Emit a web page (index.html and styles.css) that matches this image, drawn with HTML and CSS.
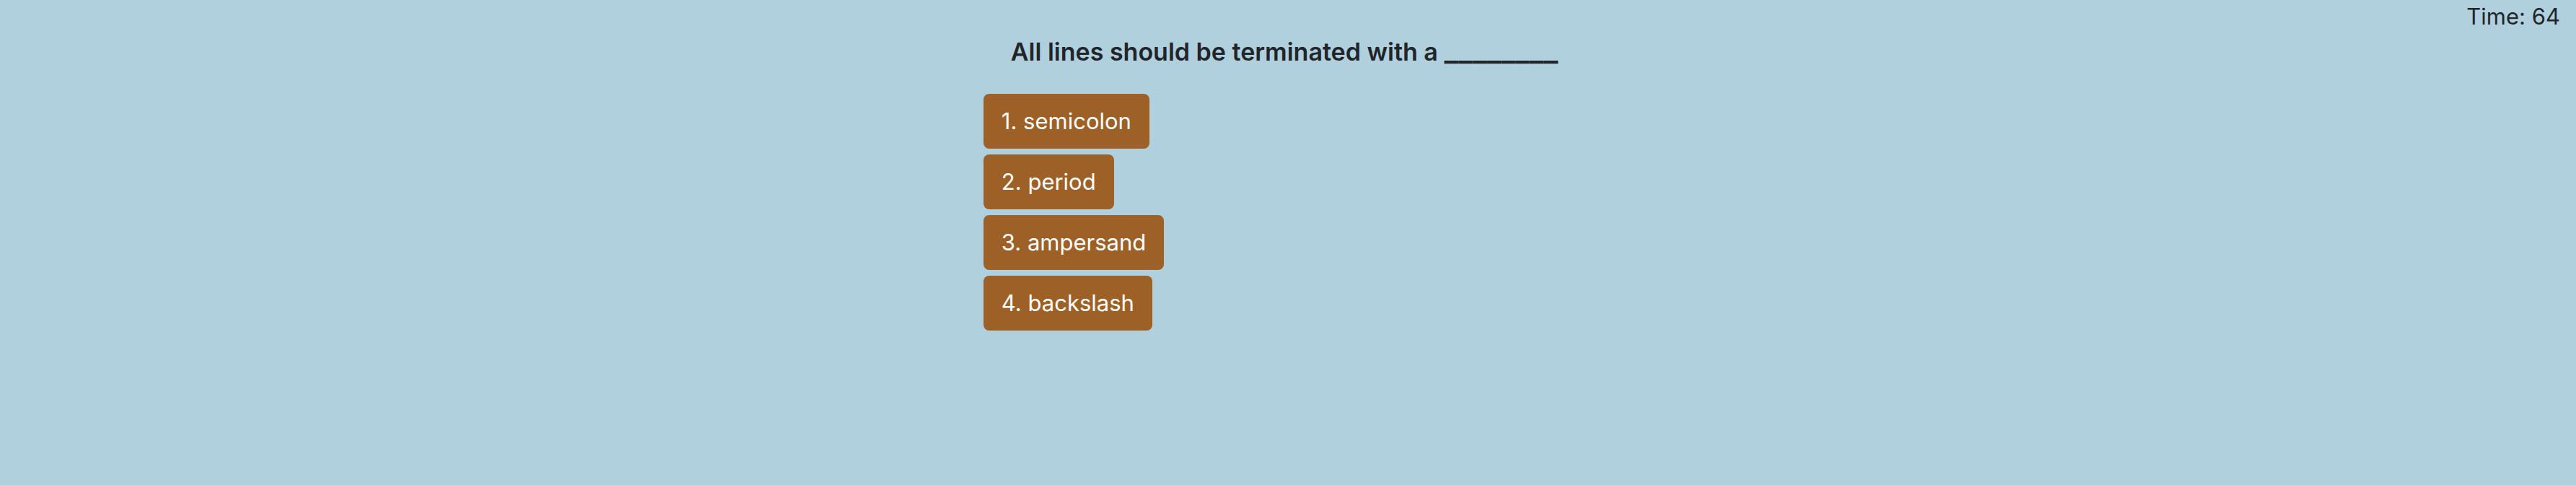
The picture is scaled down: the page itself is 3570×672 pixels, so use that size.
FILE: index.html
```html
<!DOCTYPE html>
<html lang="en">
<head>
<meta charset="utf-8">
<title>Quiz</title>
<link rel="stylesheet" href="styles.css">
</head>
<body>
<header class="timer">Time: 64</header>
<main class="quiz">
<h1 class="question">All lines should be terminated with a <span class="blank">________</span></h1>
<ol class="choices">
<li><button class="choice" type="button">1. semicolon</button></li>
<li><button class="choice" type="button">2. period</button></li>
<li><button class="choice" type="button">3. ampersand</button></li>
<li><button class="choice" type="button">4. backslash</button></li>
</ol>
</main>
</body>
</html>
```
FILE: styles.css
```css
body {
  margin: 0;
  background: #b0d0dd;
  color: #212529;
  font-family: Inter, sans-serif;
  font-size: 31px;
  line-height: 46px;
}
.timer {
  padding: 0 22px;
  text-align: right;
}
.quiz {
  width: fit-content;
  margin: 0 auto;
}
.question {
  margin: 0 0 32px;
  padding: 0 48px 0 38px;
  font-size: 34px;
  font-weight: 600;
  line-height: 52px;
}
.blank {
  font-size: 42px;
  line-height: 1;
}
.choices {
  display: grid;
  gap: 8px;
  margin: 0;
  padding: 0;
  list-style: none;
}
.choice {
  display: block;
  padding: 14px 25px;
  border: 0;
  border-radius: 8px;
  background: #9d6127;
  color: #fff;
  font: inherit;
  line-height: 48px;
}
```
